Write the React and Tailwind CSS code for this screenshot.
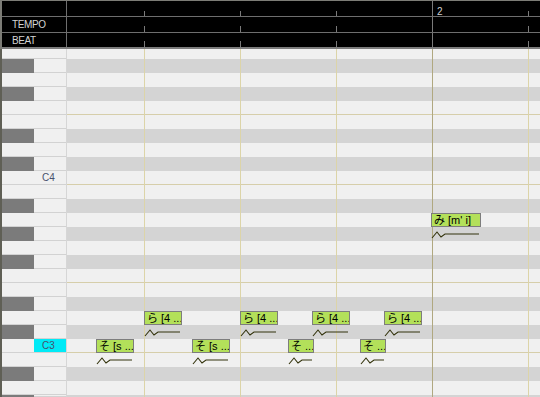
import React from "react";

// piano roll rows from top (partially scrolled), [name, isBlack, height]
const ROWS = [
  ["A4", 0, 10], ["G#4", 1], ["G4", 0], ["F#4", 1], ["F4", 0], ["E4", 0],
  ["D#4", 1], ["D4", 0], ["C#4", 1], ["C4", 0], ["B3", 0], ["A#3", 1],
  ["A3", 0], ["G#3", 1], ["G3", 0], ["F#3", 1], ["F3", 0], ["E3", 0],
  ["D#3", 1], ["D3", 0], ["C#3", 1], ["C3", 0], ["B2", 0], ["A#2", 1],
  ["A2", 0], ["G#2", 1, 2],
];

// x positions are relative to the grid (which starts at x=67)
const BEATS = [77, 173, 269, 461];
const MEASURES = [365];

const NOTES = [
  { x: 29, y: 290, w: 38, text: "そ [s ..." },
  { x: 77, y: 262, w: 38, text: "ら [4 ..." },
  { x: 125, y: 290, w: 38, text: "そ [s ..." },
  { x: 173, y: 262, w: 38, text: "ら [4 ..." },
  { x: 221, y: 290, w: 26, text: "そ ..." },
  { x: 245, y: 262, w: 38, text: "ら [4 ..." },
  { x: 293, y: 290, w: 26, text: "そ ..." },
  { x: 317, y: 262, w: 38, text: "ら [4 ..." },
  { x: 364, y: 164, w: 50, text: "み [m' i]" },
];

function HeaderRow({ label, h, tick, children, last }) {
  return (
    <div
      className={`flex ${last ? "border-b-2 border-[#7c7c7c]" : "border-b border-[#6e6e6e]"}`}
      style={{ height: h }}
    >
      <div className="w-[65px] shrink-0 border-r border-[#6e6e6e] flex items-center pl-[10px] text-[10px] text-[#d4d4d4] tracking-[-0.4px]">
        {label}
      </div>
      <div className="relative flex-1">
        {BEATS.map((x) => (
          <div
            key={x}
            className="absolute bottom-0 w-px bg-[#7a7a7a]"
            style={{ left: x, height: tick }}
          />
        ))}
        {MEASURES.map((x) => (
          <div key={x} className="absolute top-0 bottom-0 w-px bg-[#7a7a7a]" style={{ left: x }} />
        ))}
        {children}
      </div>
    </div>
  );
}

function Note({ x, y, w, text }) {
  return (
    <div className="absolute" style={{ left: x, top: y, width: w }}>
      <div className="h-[14px] bg-[#b3e05a] border border-[#7d7d7d] overflow-hidden whitespace-nowrap text-[11px] leading-[12px] text-black pl-[2px]">
        {text}
      </div>
      <svg width={w} height={14} className="block">
        <polyline
          points={`1,11 6,5 10,10 14,7 ${w - 2},7`}
          fill="none"
          stroke="#33330c"
          strokeWidth="1.1"
        />
      </svg>
    </div>
  );
}

export default function App() {
  return (
    <div className="w-[540px] h-[397px] overflow-hidden bg-black font-['Liberation_Sans','Noto_Sans_CJK_JP',sans-serif]">
      {/* HEADER */}
      <div className="border-t border-l-2 border-[#7c7c76]">
        <HeaderRow label="" h={16} tick={5}>
          <span className="absolute left-[370px] top-[3px] text-[10px] text-[#d0d0d0]">2</span>
        </HeaderRow>
        <HeaderRow label="TEMPO" h={16} tick={6} />
        <HeaderRow label="BEAT" h={16} tick={6} last />
      </div>

      {/* BODY */}
      <div className="flex h-[348px]">
        {/* KEYS */}
        <div className="w-[67px] shrink-0 border-l-2 border-r border-l-[#5f5f55] border-r-[#d6d6d6] flex flex-col">
          {ROWS.map(([name, black, h = 14]) => (
            <div key={name} className="flex shrink-0" style={{ height: h }}>
              <div
                className={`w-[32px] ${
                  black ? "bg-[#7b7b7b]" : "bg-[#f0f0f0] border-b border-[#d2d2d2]"
                }`}
              />
              <div
                className={`flex-1 border-b border-[#d2d2d2] flex items-center pl-[8px] text-[10px] text-[#48506c] ${
                  name === "C3" ? "bg-[#00eaf6]" : "bg-[#f0f0f0]"
                }`}
              >
                {name === "C4" || name === "C3" ? name : ""}
              </div>
            </div>
          ))}
        </div>

        {/* GRID */}
        <div className="relative flex-1 flex flex-col">
          {ROWS.map(([name, black, h = 14]) => (
            <div
              key={name}
              className={`shrink-0 ${black ? "bg-[#d4d4d4]" : "bg-[#f0f0f0]"} ${
                name === "C4" || name === "F4" || name === "C3" || name === "F3"
                  ? "border-b border-[#d6ceaa]"
                  : ""
              }`}
              style={{ height: h }}
            />
          ))}
          {BEATS.map((x) => (
            <div key={x} className="absolute top-0 bottom-0 w-px bg-[#dcd4a8]" style={{ left: x }} />
          ))}
          {MEASURES.map((x) => (
            <div key={x} className="absolute top-0 bottom-0 w-px bg-[#b0a880]" style={{ left: x }} />
          ))}
          {NOTES.map((n, i) => (
            <Note key={i} {...n} />
          ))}
        </div>
      </div>
    </div>
  );
}
